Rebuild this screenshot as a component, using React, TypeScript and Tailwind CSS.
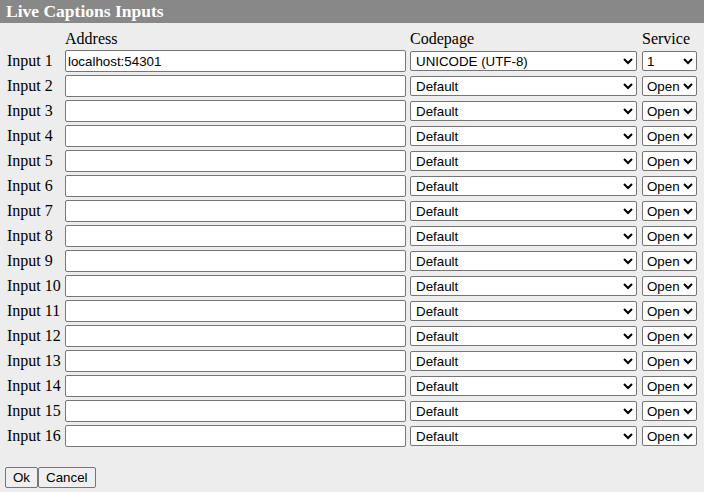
import React from 'react'

const rows = Array.from({ length: 16 }, (_, i) => i + 1)

const font = 'text-[13.33px] text-black font-["Liberation_Sans",Arial,sans-serif]'
const box = 'border border-[#767676] rounded-[2px] bg-white outline-none'

export default function App() {
  return (
    <div className="w-[704px] h-[492px] bg-[#ededed] font-['Liberation_Serif','Times_New_Roman',serif] text-black overflow-hidden">
      <div className="h-[23px] bg-[#888888] pl-[6px] flex items-center">
        <span className="text-white font-bold text-[17.5px] leading-none">Live Captions Inputs</span>
      </div>

      <div className="grid grid-cols-[58px_345px_232px_54px] pl-[7px] pt-[6px]">
        <div />
        <div className="text-[16px] leading-[20px]">Address</div>
        <div className="text-[16px] leading-[20px]">Codepage</div>
        <div className="text-[16px] leading-[20px]">Service</div>
      </div>

      <div className="flex flex-col pt-[1px] gap-[3px] pl-[7px]">
        {rows.map((n) => (
          <div key={n} className="grid grid-cols-[58px_345px_232px_55px] items-center h-[22px]">
            <div className="text-[16px] leading-[20px] whitespace-nowrap">Input {n}</div>
            <input
              type="text"
              defaultValue={n === 1 ? 'localhost:54301' : ''}
              className={`${box} ${font} h-[22px] w-[341px] px-[2px]`}
            />
            <select
              defaultValue={n === 1 ? 'utf8' : 'default'}
              className={`${box} ${font} h-[20px] w-[227px] pl-[1px]`}
            >
              <option value="default">Default</option>
              <option value="utf8">UNICODE (UTF-8)</option>
            </select>
            <select
              defaultValue={n === 1 ? '1' : 'open'}
              className={`${box} ${font} h-[20px] w-[55px] pl-0 pr-0`}
            >
              <option value="open">Open</option>
              <option value="1">1</option>
            </select>
          </div>
        ))}
      </div>

      <div className="flex pl-[5px] pt-[20px]">
        <button className={`h-[21px] px-[7px] border border-[#767676] rounded-[2px] bg-[#efefef] ${font}`}>
          Ok
        </button>
        <button className={`h-[21px] px-[7px] border border-[#767676] rounded-[2px] bg-[#efefef] ${font}`}>
          Cancel
        </button>
      </div>
    </div>
  )
}
